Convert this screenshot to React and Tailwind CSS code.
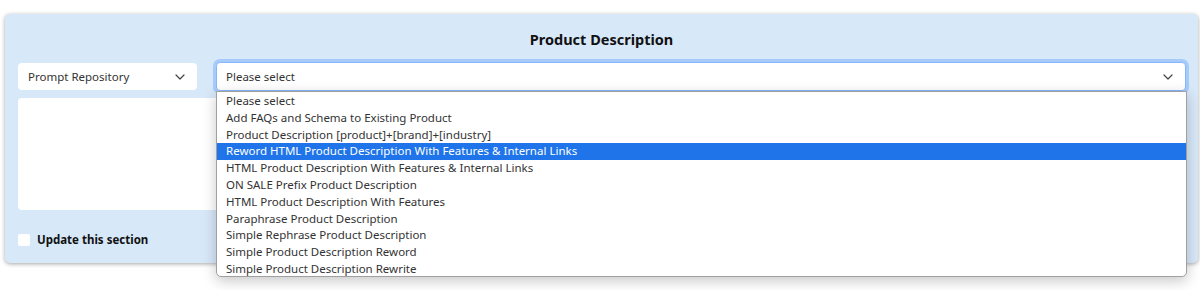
import React from "react";

const options = [
  "Please select",
  "Add FAQs and Schema to Existing Product",
  "Product Description [product]+[brand]+[industry]",
  "Reword HTML Product Description With Features & Internal Links",
  "HTML Product Description With Features & Internal Links",
  "ON SALE Prefix Product Description",
  "HTML Product Description With Features",
  "Paraphrase Product Description",
  "Simple Rephrase Product Description",
  "Simple Product Description Reword",
  "Simple Product Description Rewrite",
];

function Chevron() {
  return (
    <svg width="10" height="6" viewBox="0 0 10 6" fill="none">
      <path d="M1 1l4 4 4-4" stroke="#444" strokeWidth="1.2" strokeLinecap="round" strokeLinejoin="round" />
    </svg>
  );
}

export default function App() {
  return (
    <div
      className="relative w-[1200px] h-[290px] overflow-hidden bg-white text-[#212529]"
      style={{ fontFamily: '"Noto Sans", "Open Sans", sans-serif' }}
    >
      <div className="pt-[14px] pl-[5px] pr-[2px]">
        <div className="h-[249px] rounded-[5px] bg-[#d7e8f9] shadow-[0_1px_4px_rgba(0,0,0,0.35)] pt-[15px] px-[13px]">
          <div className="text-center text-[14.5px] font-bold leading-[20px] text-[#111]">Product Description</div>
          <div className="mt-[13px] flex items-start gap-[19px]">
            <div className="w-[179px] h-[27px] mt-[1px] bg-white rounded-[4px] flex items-center justify-between pl-[10px] pr-[12px] text-[11.5px] text-[#333]">
              <span>Prompt Repository</span>
              <Chevron />
            </div>
            <div className="flex-1 h-[29px] bg-white rounded-[4px] border border-[#86b7fe] shadow-[0_0_0_3px_#a7cbf9] flex items-center justify-between pl-[9px] pr-[12px] text-[11.5px] text-[#333] mr-[-1px]">
              <span>Please select</span>
              <Chevron />
            </div>
          </div>
          <div className="mt-[7px] h-[112px] bg-white rounded-[4px]" />
          <label className="mt-[21px] flex items-center gap-[7px]">
            <span className="w-[12px] h-[12px] bg-white rounded-[2px]" />
            <span className="text-[11.5px] font-bold text-[#111]">Update this section</span>
          </label>
        </div>
      </div>

      <div className="absolute left-[216px] top-[91px] w-[971px] h-[186px] bg-white border border-[#a0a0a0] rounded-b-[5px] shadow-[0_4px_14px_rgba(0,0,0,0.22)] pt-[1px] text-[11.5px] text-[#333]">
        {options.map((o, i) => (
          <div
            key={o}
            className={
              "h-[16.8px] leading-[16.8px] pl-[9px] whitespace-nowrap " +
              (i === 3 ? "bg-[#1e74e8] text-white" : "")
            }
          >
            {o}
          </div>
        ))}
      </div>
    </div>
  );
}
